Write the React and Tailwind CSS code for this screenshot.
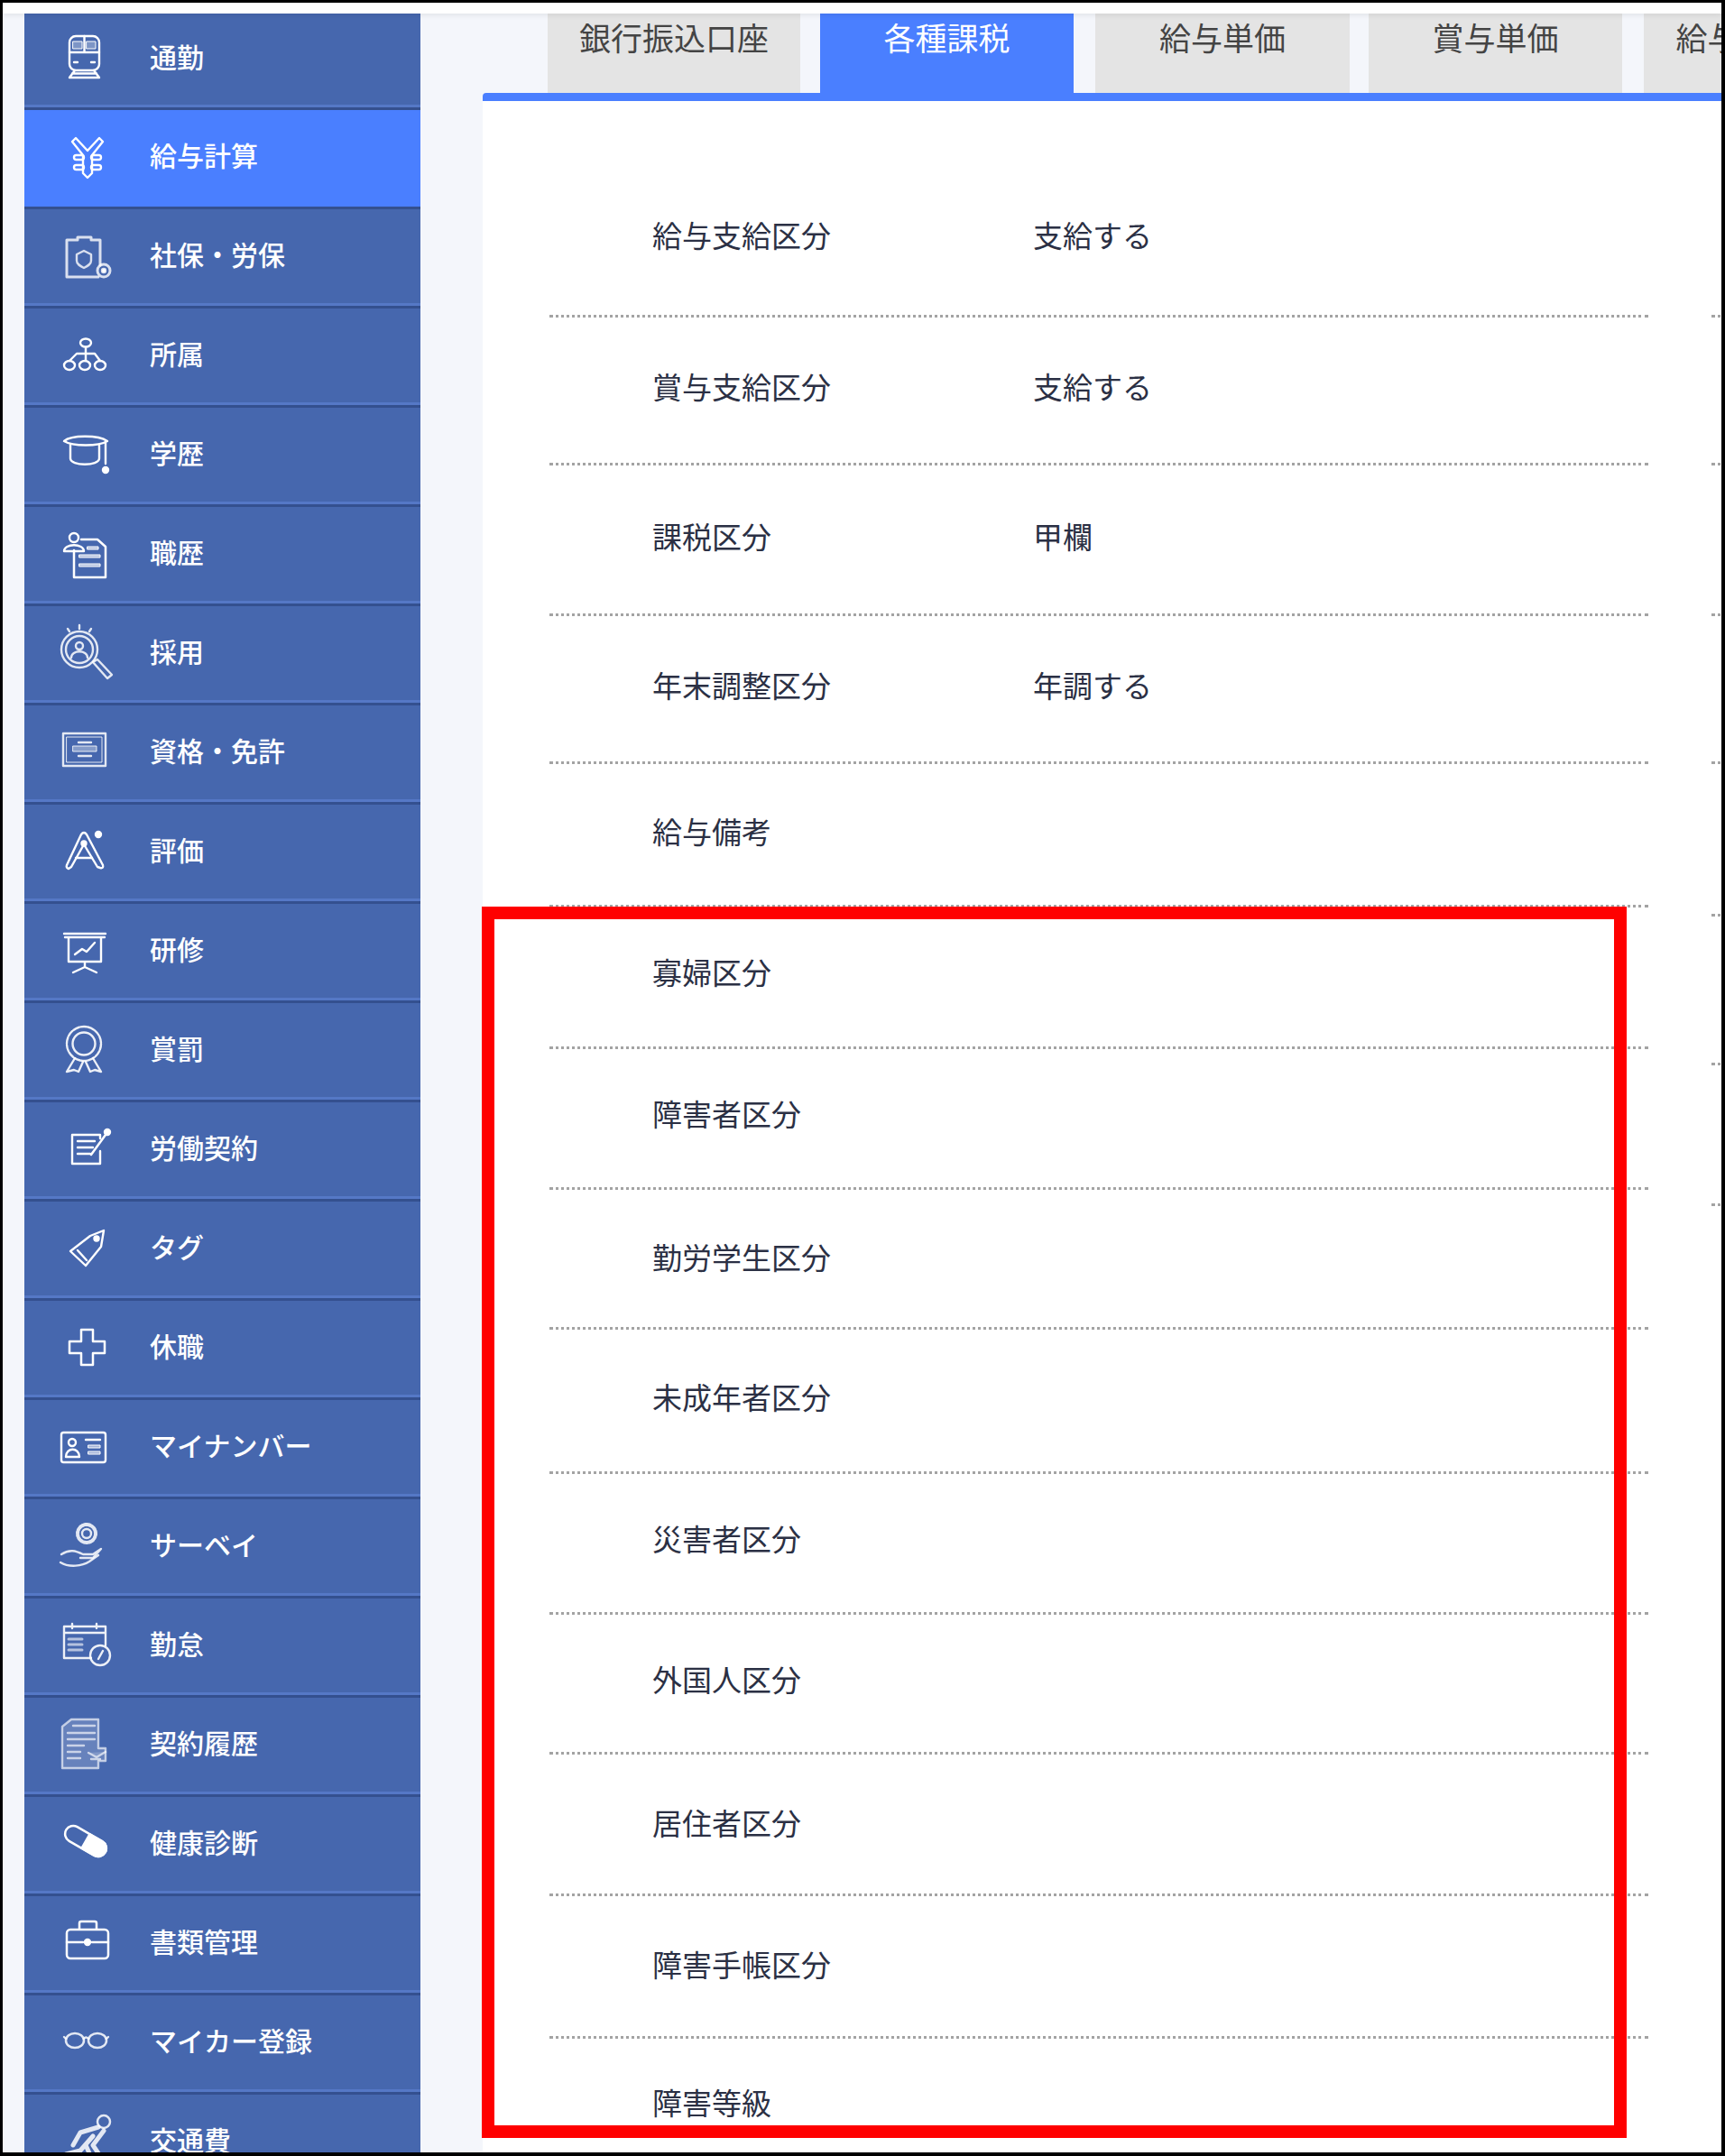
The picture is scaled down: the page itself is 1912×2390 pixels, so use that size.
import React from 'react';

const Train = () => (
  <>
    <rect x="12" y="9" width="33" height="38" rx="7" />
    <path d="M12 27H45M28.5 9V27M18 47L12 55M39 47L45 55M15 50.5H42M12 55H45" />
    <rect x="16" y="15" width="10" height="8" fill="#ffffff" fillOpacity="0.3" strokeWidth="1" />
    <rect x="31" y="15" width="10" height="8" fill="#ffffff" fillOpacity="0.3" strokeWidth="1" />
    <path d="M17 38H21M36 38H40" />
  </>
);

const Salary = () => (
  <>
    <path d="M15 17L19 13L32 27L45 13L49 17L37 32V52L32 57L27 52V32Z" />
    <rect x="17" y="32" width="11" height="5" rx="2.5" />
    <rect x="36" y="32" width="11" height="5" rx="2.5" />
    <rect x="17" y="43" width="11" height="5" rx="2.5" />
    <rect x="36" y="43" width="11" height="5" rx="2.5" />
  </>
);

const Clipboard = () => (
  <g strokeOpacity="0.8">
    <path d="M46 44V16H36V13H21V16H9V57H44" strokeWidth="3" />
    <path d="M28 28L36 32V39C36 43 32 45 28 47C24 45 20 43 20 39V32Z" />
    <circle cx="50" cy="50" r="7" strokeWidth="3" />
    <circle cx="50" cy="50" r="2" fill="#ffffff" />
  </g>
);

const Org = () => (
  <>
    <ellipse cx="30" cy="20" rx="6" ry="4.5" />
    <ellipse cx="12" cy="45" rx="6" ry="5" />
    <ellipse cx="29" cy="45" rx="6" ry="5" />
    <ellipse cx="46" cy="45" rx="6" ry="5" />
    <path d="M30 25V40M12 40L20 32H40L46 40" />
  </>
);

const Cap = () => (
  <>
    <path d="M6 19C14 12 44 12 54 19C44 25 16 25 6 19Z" />
    <path d="M13 23V38C13 47 45 47 45 38V23M52 21V44" />
    <circle cx="52" cy="51" r="3" fill="#ffffff" />
  </>
);

const Career = () => (
  <>
    <path d="M17 30V60H52V26L43 18H25" strokeWidth="2.5" />
    <circle cx="17" cy="16" r="5" />
    <path d="M6 31C6 22 28 22 28 31Z" />
    <rect x="32" y="26" width="12" height="3" fill="#ffffff" fillOpacity="0.6" strokeWidth="1" />
    <rect x="23" y="35" width="23" height="3" fill="#ffffff" fillOpacity="0.6" strokeWidth="1" />
    <rect x="23" y="45" width="23" height="3" fill="#ffffff" fillOpacity="0.6" strokeWidth="1" />
  </>
);

const Recruit = () => (
  <g strokeOpacity="0.85">
    <circle cx="23" cy="30" r="20" />
    <circle cx="23" cy="30" r="15" />
    <circle cx="23" cy="26" r="4" />
    <path d="M14 39C14 30 32 30 32 39" />
    <path d="M38 44L43 41L59 58L54 62Z" />
    <path d="M23 3V7M10 7L12 10M36 7L34 10" />
  </g>
);

const Certificate = () => (
  <g strokeOpacity="0.85">
    <rect x="5" y="13" width="47" height="36" />
    <rect x="9" y="17" width="39" height="28" strokeWidth="1" />
    <rect x="16" y="27" width="26" height="6" fill="#ffffff" fillOpacity="0.35" strokeWidth="1" />
    <path d="M22 23H36M22 38H36" />
  </g>
);

const Rating = () => (
  <>
    <path d="M9 49L25 15Q28 11 31 15L49 49Q50 53 46 52L43 51L28 26L14 51L11 53Q8 52 9 49Z" />
    <path d="M19 41H37" />
    <circle cx="28" cy="25" r="2.5" fill="#ffffff" />
    <circle cx="44" cy="15" r="3" fill="#ffffff" />
  </>
);

const Training = () => (
  <>
    <path d="M6 15H52M7 19H51M11 19V46H47V19M29 46V52M16 58L29 52L42 58" />
    <path d="M18 38L26 32L31 35L40 25" />
  </>
);

const Award = () => (
  <g strokeOpacity="0.9">
    <circle cx="28" cy="27" r="19" strokeDasharray="7 1.5" />
    <circle cx="28" cy="27" r="12.5" />
    <path d="M18 43L9 58L17 56L22 58L27 47M38 43L47 58L40 56L35 58L30 47" />
  </g>
);

const Contract = () => (
  <>
    <path d="M46 36V50H15V18H46V22" />
    <path d="M21 25H40M21 32H38M21 39H35" />
    <path d="M36 40L52 18" strokeWidth="2.5" />
    <circle cx="54" cy="15" r="3" fill="#ffffff" />
  </>
);

const Tag = () => (
  <>
    <path d="M13 37L35 20L50 14L47 32L30 53Z" />
    <path d="M21 36L31 47" />
    <circle cx="42" cy="23" r="2.5" fill="#ffffff" />
  </>
);

const Cross = () => <path d="M25 14H38V27H51V40H38V53H25V40H12V27H25Z" strokeWidth="2.5" />;

const IdCard = () => (
  <>
    <rect x="3" y="18" width="49" height="33" rx="2.5" />
    <circle cx="15" cy="29" r="4" />
    <path d="M8 45C8 34 23 34 23 45M8 45H23M30 26H46" />
    <rect x="33" y="32" width="13" height="3" fill="#ffffff" fillOpacity="0.5" strokeWidth="1" />
    <rect x="33" y="39" width="13" height="3" fill="#ffffff" fillOpacity="0.5" strokeWidth="1" />
  </>
);

const Survey = () => (
  <g strokeOpacity="0.85">
    <circle cx="31" cy="20" r="5" />
    <circle cx="31" cy="20" r="10" strokeDasharray="2 1.5" strokeWidth="4" />
    <path d="M3 43C12 37 19 39 27 43L38 43L47 37L38 47L24 47" />
    <path d="M2 52C12 58 26 56 34 51L44 44" />
  </g>
);

const Attendance = () => (
  <g strokeOpacity="0.9">
    <path d="M36 48H6V13H52V34M6 20H52M15 10V15M42 10V15" />
    <path d="M11 27H26M11 33H26M11 39H26" strokeWidth="3" strokeOpacity="0.6" />
    <circle cx="46" cy="45" r="11" />
    <path d="M49 40L44 49" />
  </g>
);

const History = () => (
  <g strokeOpacity="0.65" fill="#ffffff" fillOpacity="0.18">
    <path d="M4 14L14 6H44V38H52V52H44V60H4Z" />
    <path d="M16 13H40M10 21H40M10 28H40M10 35H28M10 42H24M10 49H24M33 43L42 48L52 42M36 50H46" />
  </g>
);

const Pill = () => (
  <g transform="rotate(30 30 31)">
    <rect x="5" y="22" width="50" height="18" rx="9" strokeWidth="2.5" />
    <path d="M30 22H46A9 9 0 0 1 46 40H30Z" fill="#ffffff" />
  </g>
);

const Briefcase = () => (
  <>
    <rect x="9" y="19" width="46" height="32" rx="4" strokeWidth="2.5" />
    <path d="M23 18V12Q23 10 25 10H40Q42 10 42 12V18M9 33H27M37 33H55" strokeWidth="2.5" />
    <circle cx="32" cy="33" r="3" fill="#ffffff" />
  </>
);

const Glasses = () => (
  <g strokeOpacity="0.85">
    <ellipse cx="18" cy="32" rx="10" ry="8" strokeWidth="2.5" />
    <ellipse cx="43" cy="32" rx="10" ry="8" strokeWidth="2.5" />
    <path d="M28 30Q30 27 33 30M8 30L6 28M53 30L55 28" />
  </g>
);

const Runner = () => (
  <g strokeOpacity="0.85">
    <circle cx="50" cy="12" r="7" strokeWidth="2.5" />
    <path d="M44 18L24 24L16 38M50 22L38 38L46 50M38 28L24 44L8 48L3 60M30 38L40 60" strokeWidth="5" />
  </g>
);

const menuItems = [
  { label: '通勤', icon: Train },
  { label: '給与計算', icon: Salary, active: true },
  { label: '社保・労保', icon: Clipboard },
  { label: '所属', icon: Org },
  { label: '学歴', icon: Cap },
  { label: '職歴', icon: Career },
  { label: '採用', icon: Recruit },
  { label: '資格・免許', icon: Certificate },
  { label: '評価', icon: Rating },
  { label: '研修', icon: Training },
  { label: '賞罰', icon: Award },
  { label: '労働契約', icon: Contract },
  { label: 'タグ', icon: Tag },
  { label: '休職', icon: Cross },
  { label: 'マイナンバー', icon: IdCard },
  { label: 'サーベイ', icon: Survey },
  { label: '勤怠', icon: Attendance },
  { label: '契約履歴', icon: History },
  { label: '健康診断', icon: Pill },
  { label: '書類管理', icon: Briefcase },
  { label: 'マイカー登録', icon: Glasses },
  { label: '交通費', icon: Runner },
];

const tabs = [
  { label: '銀行振込口座', size: 'w-[280px] mr-[22px]' },
  { label: '各種課税', size: 'w-[281px] mr-[24px]', active: true },
  { label: '給与単価', size: 'w-[282px] mr-[21px]' },
  { label: '賞与単価', size: 'w-[281px] mr-[24px]' },
  { label: '給与固定手当', size: 'w-[281px]' },
];

// row heights follow the screenshot, they are not quite even
const fields = [
  { label: '給与支給区分', value: '支給する', size: 'h-[240px] pt-[58px]' },
  { label: '賞与支給区分', value: '支給する', size: 'h-[164px] pb-[9px]' },
  { label: '課税区分', value: '甲欄', size: 'h-[167px] pb-[8px]' },
  { label: '年末調整区分', value: '年調する', size: 'h-[164px] pb-[9px]' },
  { label: '給与備考', size: 'h-[159px] pb-[8px]' },
  { label: '寡婦区分', size: 'h-[157px] pb-[13px]' },
  { label: '障害者区分', size: 'h-[156px] pb-[12px]' },
  { label: '勤労学生区分', size: 'h-[155px] pb-[5px]' },
  { label: '未成年者区分', size: 'h-[160px] pb-[9px]' },
  { label: '災害者区分', size: 'h-[156px] pb-[11px]' },
  { label: '外国人区分', size: 'h-[155px] pb-[11px]' },
  { label: '居住者区分', size: 'h-[157px] pb-[5px]' },
  { label: '障害手帳区分', size: 'h-[158px] pb-[6px]' },
];

const sideLines = ['h-[240px]', 'h-[164px]', 'h-[167px]', 'h-[164px]', 'h-[169px]', 'h-[165px]', 'h-[156px]'];

const SideRow = ({ item, first }) => {
  const Icon = item.icon;
  return (
    <div
      className={`flex items-center shrink-0 pl-[38px] pb-[10px] border-b-[3px] border-[#34508f] ${first ? 'h-[107px]' : 'h-[110px]'} ${
        item.active ? 'bg-[#4a7fff]' : 'bg-[#4667ae] shadow-[inset_0_-3px_0_#5578c6]'
      }`}
    >
      <svg
        viewBox="0 0 62 62"
        className="w-[62px] h-[62px] shrink-0 overflow-visible"
        fill="none"
        stroke="#ffffff"
        strokeWidth="2.4"
        strokeLinecap="round"
        strokeLinejoin="round"
      >
        <Icon />
      </svg>
      <span className="ml-[39px] text-[30px] font-medium leading-[40px] text-white whitespace-nowrap">{item.label}</span>
    </div>
  );
};

const App = () => {
  return (
    <div className="relative w-[1912px] h-[2390px] overflow-hidden flex flex-col bg-[#f4f6fb] border-l-[3px] border-t-[3px] border-r-[4px] border-b-[4px] border-black font-['Noto_Sans_CJK_JP','Noto_Sans',sans-serif]">
      <div className="h-[12px] shrink-0 bg-white relative z-10 shadow-[0_2px_6px_rgba(0,0,0,0.08)]"></div>

      <div className="flex flex-1 min-h-0">
        <nav className="ml-[24px] w-[439px] shrink-0 flex flex-col overflow-hidden">
          {menuItems.map((item, i) => (
            <SideRow key={item.label} item={item} first={i === 0} />
          ))}
        </nav>

        <main className="ml-[69px] flex-1 min-w-0 flex flex-col overflow-hidden">
          <div className="flex pl-[72px] h-[88px] shrink-0 overflow-hidden">
            {tabs.map((tab) => (
              <div
                key={tab.label}
                className={`shrink-0 pt-[5px] text-center text-[35px] leading-[42px] whitespace-nowrap ${tab.size} ${
                  tab.active ? 'bg-[#4a7fff] text-white' : 'bg-[#e4e4e4] text-[#444444]'
                }`}
              >
                {tab.label}
              </div>
            ))}
          </div>

          <div className="flex flex-1 min-h-0 bg-white border-t-[9px] border-[#4a7fff] rounded-tl-[4px] pl-[74px] overflow-hidden">
            <div className="w-[1218px] shrink-0 flex flex-col">
              {fields.map((field) => (
                <div
                  key={field.label}
                  className={`flex items-center shrink-0 pl-[114px] border-b-[3px] border-dotted border-[#a3a3a3] text-[33px] leading-[44px] text-[#2b3044] ${field.size}`}
                >
                  <span className="w-[422px] shrink-0">{field.label}</span>
                  {field.value && <span>{field.value}</span>}
                </div>
              ))}
              <div className="pl-[114px] pt-[48px] text-[33px] leading-[44px] text-[#2b3044]">障害等級</div>
            </div>

            <div className="ml-[70px] w-[300px] shrink-0 flex flex-col">
              {sideLines.map((line, i) => (
                <div key={i} className={`shrink-0 border-b-[3px] border-dotted border-[#a3a3a3] ${line}`}></div>
              ))}
            </div>
          </div>
        </main>
      </div>

      {/* annotation drawn over the screenshot */}
      <div className="absolute left-[531px] top-[1002px] w-[1269px] h-[1365px] border-[14px] border-[#ff0000] pointer-events-none"></div>
    </div>
  );
};

export default App;
